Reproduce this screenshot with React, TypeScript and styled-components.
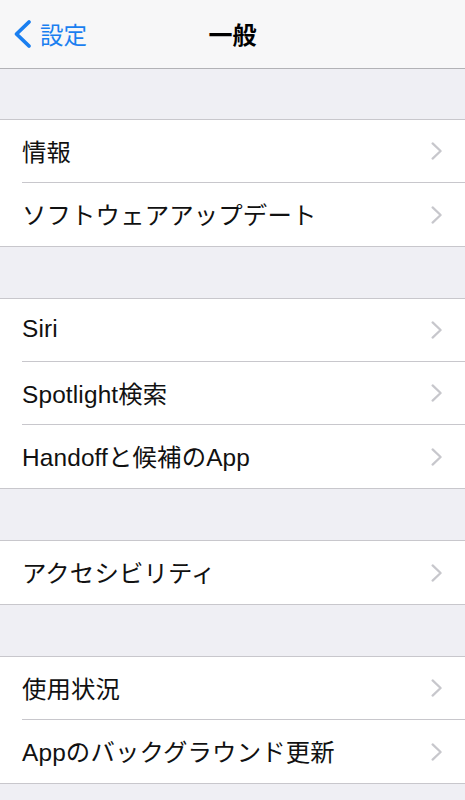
import React from "react";
import styled, { createGlobalStyle } from "styled-components";

const Global = createGlobalStyle`
  html, body { margin: 0; padding: 0; background: #efeff4; }
  body {
    font-family: "Liberation Sans", "Noto Sans CJK JP", sans-serif;
    -webkit-font-smoothing: antialiased;
  }
`;

const Page = styled.div`
  width: 465px;
  min-height: 800px;
  background: #efeff4;
  overflow: hidden;
`;

const NavBar = styled.header`
  height: 68px;
  background: #f7f7f8;
  border-bottom: 1px solid #b2b2b6;
  display: grid;
  grid-template-columns: 1fr auto 1fr;
  align-items: center;
`;

const BackButton = styled.div`
  display: flex;
  align-items: center;
  gap: 8px;
  padding-left: 12px;
  color: #1a7ff0;
  font-size: 23.5px;
  font-family: "Noto Sans CJK JP", sans-serif;
  margin-top: -1px;
`;

const Title = styled.h1`
  margin: -1px 0 0;
  font-size: 24px;
  font-weight: 700;
  color: #000;
  font-family: "Noto Sans CJK JP", sans-serif;
`;

const Content = styled.main`
  display: flex;
  flex-direction: column;
  gap: 51px;
  padding-top: 50px;
`;

const Section = styled.section`
  background: #fff;
  border-top: 1px solid #c8c7cc;
  border-bottom: 1px solid #c8c7cc;
`;

const Row = styled.div`
  padding-left: 22px;
  background: #fff;
`;

const RowInner = styled.div<{ $last: boolean }>`
  box-sizing: border-box;
  height: 63px;
  display: flex;
  align-items: center;
  justify-content: space-between;
  padding-right: 22px;
  border-bottom: ${(p) => (p.$last ? "none" : "1px solid #c8c7cc")};
`;

const Label = styled.span`
  font-size: 24.4px;
  color: #111;
  font-family: "Liberation Sans", "Noto Sans CJK JP", sans-serif;
  letter-spacing: 0.15px;
  margin-top: -2px;
`;

const Chevron = () => (
  <svg width="12" height="18" viewBox="0 0 12 18" fill="none">
    <path
      d="M1.6 1.4 L9.6 9 L1.6 16.6"
      stroke="#c7c7cc"
      strokeWidth="2.2"
      strokeLinecap="round"
      strokeLinejoin="round"
    />
  </svg>
);

const BackChevron = () => (
  <svg width="20" height="30" viewBox="0 0 20 30" fill="none">
    <path
      d="M17 3 L4.5 15 L17 27"
      stroke="#1a7ff0"
      strokeWidth="3.8"
      strokeLinecap="round"
      strokeLinejoin="round"
    />
  </svg>
);

const sections: string[][] = [
  ["情報", "ソフトウェアアップデート"],
  ["Siri", "Spotlight検索", "Handoffと候補のApp"],
  ["アクセシビリティ"],
  ["使用状況", "Appのバックグラウンド更新"],
];

export default function App() {
  return (
    <Page>
      <Global />
      <NavBar>
        <BackButton>
          <BackChevron />
          <span>設定</span>
        </BackButton>
        <Title>一般</Title>
        <div />
      </NavBar>
      <Content>
        {sections.map((items, si) => (
          <Section key={si}>
            {items.map((label, i) => (
              <Row key={label}>
                <RowInner $last={i === items.length - 1}>
                  <Label>{label}</Label>
                  <Chevron />
                </RowInner>
              </Row>
            ))}
          </Section>
        ))}
      </Content>
    </Page>
  );
}
